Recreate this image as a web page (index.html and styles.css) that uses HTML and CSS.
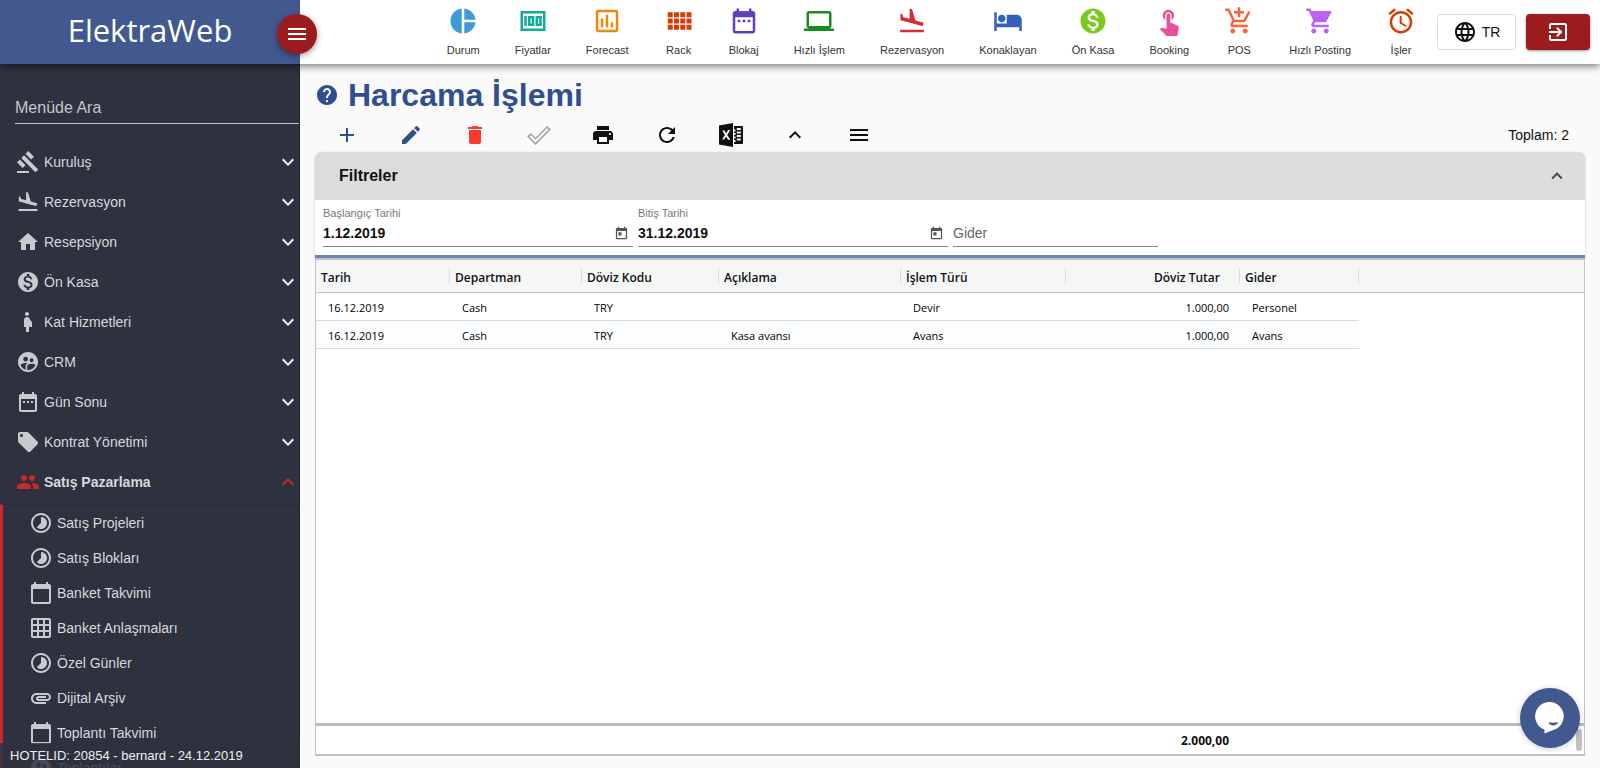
FILE: index.html
```html
<!DOCTYPE html>
<html lang="tr">
<head>
    <meta charset="UTF-8">
    <meta name="viewport" content="width=device-width, initial-scale=1.0">
    <title>ElektraWeb - Harcama İşlemi</title>
    <link rel="stylesheet" href="styles.css">
</head>
<body>
    <!-- icon set -->
    <svg class="sprite" aria-hidden="true">
        <symbol id="i-menu" viewBox="0 0 24 24"><path d="M3 18h18v-2H3v2zm0-5h18v-2H3v2zm0-7v2h18V6H3z"/></symbol>
        <symbol id="i-more" viewBox="0 0 24 24"><path d="M16.59 8.59L12 13.17 7.41 8.59 6 10l6 6 6-6z"/></symbol>
        <symbol id="i-less" viewBox="0 0 24 24"><path d="M12 8l-6 6 1.41 1.41L12 10.83l4.59 4.58L18 14z"/></symbol>
        <symbol id="i-gavel" viewBox="0 0 24 24"><path d="M1 21h12v2H1zM5.245 8.07l2.83-2.827 14.14 14.142-2.828 2.828zM12.317 1l5.657 5.656-2.83 2.83-5.654-5.66zM3.825 9.485l5.657 5.657-2.828 2.828-5.657-5.657z"/></symbol>
        <symbol id="i-land" viewBox="0 0 24 24"><path d="M2.5 19h19v2h-19zm7.18-5.73l4.35 1.16 5.31 1.42c.8.21 1.62-.26 1.84-1.06.21-.8-.26-1.62-1.06-1.84l-5.31-1.42-2.76-9.02L10.12 2v8.28L5.15 8.95l-.93-2.32-1.45-.39v5.17l1.6.43 5.31 1.43z"/></symbol>
        <symbol id="i-home" viewBox="0 0 24 24"><path d="M10 20v-6h4v6h5v-8h3L12 3 2 12h3v8z"/></symbol>
        <symbol id="i-money" viewBox="0 0 24 24"><path d="M12 2C6.48 2 2 6.48 2 12s4.48 10 10 10 10-4.48 10-10S17.52 2 12 2zm1.41 16.09V20h-2.67v-1.93c-1.71-.36-3.16-1.46-3.27-3.4h1.96c.1 1.05.82 1.87 2.65 1.87 1.96 0 2.4-.98 2.4-1.59 0-.83-.44-1.61-2.67-2.14-2.48-.6-4.18-1.62-4.18-3.67 0-1.72 1.39-2.84 3.11-3.21V4h2.67v1.95c1.86.45 2.79 1.86 2.85 3.39H14.3c-.05-1.11-.64-1.87-2.22-1.87-1.5 0-2.4.68-2.4 1.64 0 .84.65 1.39 2.67 1.91s4.18 1.39 4.18 3.91c-.01 1.83-1.38 2.83-3.12 3.16z"/></symbol>
        <symbol id="i-woman" viewBox="0 0 24 24"><path d="M9 4c0-1.11.89-2 2-2s2 .89 2 2-.89 2-2 2-2-.89-2-2zm7 9c-.01-1.34-.83-2.51-2-3 0-1.66-1.34-3-3-3s-3 1.34-3 3v7h2v5h3v-5h3v-4z"/></symbol>
        <symbol id="i-crm" viewBox="0 0 24 24"><path d="M11.99 2c-5.52 0-10 4.48-10 10s4.48 10 10 10 10-4.48 10-10-4.48-10-10-10zm3.61 6.34c1.07 0 1.93.86 1.93 1.93 0 1.07-.86 1.93-1.93 1.93-1.07 0-1.93-.86-1.93-1.93-.01-1.07.86-1.93 1.93-1.93zm-6-1.58c1.3 0 2.36 1.06 2.36 2.36 0 1.3-1.06 2.36-2.36 2.36s-2.36-1.06-2.36-2.36c0-1.31 1.05-2.36 2.36-2.36zm0 9.13v3.75c-2.4-.75-4.3-2.6-5.14-4.96 1.05-1.12 3.67-1.69 5.14-1.69.53 0 1.2.08 1.9.22-1.64.87-1.9 2.02-1.9 2.68zM11.99 20c-.27 0-.53-.01-.79-.04v-4.07c0-1.42 2.94-2.13 4.4-2.13 1.07 0 2.92.39 3.84 1.15-1.17 2.97-4.06 5.09-7.45 5.09z"/></symbol>
        <symbol id="i-range" viewBox="0 0 24 24"><path d="M9 11H7v2h2v-2zm4 0h-2v2h2v-2zm4 0h-2v2h2v-2zm2-7h-1V2h-2v2H8V2H6v2H5c-1.11 0-1.99.9-1.99 2L3 20c0 1.1.89 2 2 2h14c1.1 0 2-.9 2-2V6c0-1.1-.9-2-2-2zm0 16H5V9h14v11z"/></symbol>
        <symbol id="i-tag" viewBox="0 0 24 24"><path d="M21.41 11.58l-9-9C12.05 2.22 11.55 2 11 2H4c-1.1 0-2 .9-2 2v7c0 .55.22 1.05.59 1.42l9 9c.36.36.86.58 1.41.58.55 0 1.05-.22 1.41-.59l7-7c.37-.36.59-.86.59-1.41 0-.55-.23-1.06-.59-1.42zM5.5 7C4.67 7 4 6.33 4 5.5S4.67 4 5.5 4 7 4.67 7 5.5 6.33 7 5.5 7z"/></symbol>
        <symbol id="i-people" viewBox="0 0 24 24"><path d="M16 11c1.66 0 2.99-1.34 2.99-3S17.66 5 16 5c-1.66 0-3 1.34-3 3s1.34 3 3 3zm-8 0c1.66 0 2.99-1.34 2.99-3S9.66 5 8 5C6.34 5 5 6.34 5 8s1.34 3 3 3zm0 2c-2.33 0-7 1.17-7 3.5V19h14v-2.5c0-2.33-4.67-3.5-7-3.5zm8 0c-.29 0-.62.02-.97.05 1.16.84 1.97 1.97 1.97 3.45V19h6v-2.5c0-2.33-4.67-3.5-7-3.5z"/></symbol>
        <symbol id="i-lapse" viewBox="0 0 24 24"><path d="M16.24 7.76C15.07 6.59 13.54 6 12 6v6l-4.24 4.24c2.34 2.34 6.14 2.34 8.49 0 2.34-2.34 2.34-6.14-.01-8.48zM12 2C6.48 2 2 6.48 2 12s4.48 10 10 10 10-4.48 10-10S17.52 2 12 2zm0 18c-4.42 0-8-3.58-8-8s3.58-8 8-8 8 3.58 8 8-3.58 8-8 8z"/></symbol>
        <symbol id="i-calendar" viewBox="0 0 24 24"><path d="M20 3h-1V1h-2v2H7V1H5v2H4c-1.1 0-2 .9-2 2v16c0 1.1.9 2 2 2h16c1.1 0 2-.9 2-2V5c0-1.1-.9-2-2-2zm0 18H4V8h16v13z"/></symbol>
        <symbol id="i-grid" viewBox="0 0 24 24"><path d="M20 2H4c-1.1 0-2 .9-2 2v16c0 1.1.9 2 2 2h16c1.1 0 2-.9 2-2V4c0-1.1-.9-2-2-2zM8 20H4v-4h4v4zm0-6H4v-4h4v4zm0-6H4V4h4v4zm6 12h-4v-4h4v4zm0-6h-4v-4h4v4zm0-6h-4V4h4v4zm6 12h-4v-4h4v4zm0-6h-4v-4h4v4zm0-6h-4V4h4v4z"/></symbol>
        <symbol id="i-clip" viewBox="0 0 24 24"><path d="M2 12.5C2 9.46 4.46 7 7.5 7H18c2.21 0 4 1.79 4 4s-1.79 4-4 4H9.5C8.12 15 7 13.88 7 12.5S8.12 10 9.5 10H17v2H9.41c-.55 0-.55 1 0 1H18c1.1 0 2-.9 2-2s-.9-2-2-2H7.5C5.57 9 4 10.57 4 12.5S5.57 16 7.5 16H17v2H7.5C4.46 18 2 15.54 2 12.5z"/></symbol>
        <symbol id="i-pie" viewBox="0 0 24 24"><path d="M11 2v20c-5.07-.5-9-4.79-9-10s3.93-9.5 9-10zm2.03 0v8.99H22c-.47-4.74-4.24-8.52-8.97-8.99zm0 11.01V22c4.74-.47 8.5-4.25 8.97-8.99h-8.97z"/></symbol>
        <symbol id="i-price" viewBox="0 0 24 24"><path fill-rule="evenodd" d="M2 4h20v16H2zM4 6v12h16V6zM5 8h2v8H5zM8 8h5v8H8zM10 10v4h1v-4zM14 8h5v8h-5zM16 10v4h1v-4z"/></symbol>
        <symbol id="i-chart" viewBox="0 0 24 24"><path d="M9 17H7v-7h2v7zm4 0h-2V7h2v10zm4 0h-2v-4h2v4zm2 2H5V5h14v14zm0-16H5c-1.1 0-2 .9-2 2v14c0 1.1.9 2 2 2h14c1.1 0 2-.9 2-2V5c0-1.1-.9-2-2-2z"/></symbol>
        <symbol id="i-rack" viewBox="0 0 24 24"><path d="M3 9h4V5H3v4zm0 5h4v-4H3v4zm5 0h4v-4H8v4zm5 0h4v-4h-4v4zM8 9h4V5H8v4zm5-4v4h4V5h-4zm5 9h4v-4h-4v4zM3 19h4v-4H3v4zm5 0h4v-4H8v4zm5 0h4v-4h-4v4zm5 0h4v-4h-4v4zm0-14v4h4V5h-4z"/></symbol>
        <symbol id="i-laptop" viewBox="0 0 24 24"><path d="M20 18c1.1 0 1.99-.9 1.99-2L22 6c0-1.1-.9-2-2-2H4c-1.1 0-2 .9-2 2v10c0 1.1.9 2 2 2H0v2h24v-2h-4zM4 6h16v10H4V6z"/></symbol>
        <symbol id="i-hotel" viewBox="0 0 24 24"><path d="M7 13c1.66 0 3-1.34 3-3S8.66 7 7 7s-3 1.34-3 3 1.34 3 3 3zm12-6h-8v7H3V5H1v15h2v-3h18v3h2v-9c0-2.21-1.79-4-4-4z"/></symbol>
        <symbol id="i-touch" viewBox="0 0 24 24"><path d="M9 11.24V7.5C9 6.12 10.12 5 11.5 5S14 6.12 14 7.5v3.74c1.21-.81 2-2.18 2-3.74C16 5.01 13.99 3 11.5 3S7 5.01 7 7.5c0 1.56.79 2.93 2 3.74zm9.84 4.63l-4.54-2.26c-.17-.07-.35-.11-.54-.11H13v-6c0-.83-.67-1.5-1.5-1.5S10 6.67 10 7.5v10.74l-3.43-.72c-.08-.01-.15-.03-.24-.03-.31 0-.59.13-.79.33l-.79.8 4.94 4.94c.27.27.65.44 1.06.44h6.79c.75 0 1.33-.55 1.44-1.28l.75-5.27c.01-.07.02-.14.02-.2 0-.62-.38-1.16-.91-1.38z"/></symbol>
        <symbol id="i-cartadd" viewBox="0 0 24 24"><path d="M11 9h2V6h3V4h-3V1h-2v3H8v2h3v3zm-4 9c-1.1 0-1.99.9-1.99 2S5.9 22 7 22s2-.9 2-2-.9-2-2-2zm10 0c-1.1 0-1.99.9-1.99 2s.89 2 1.99 2 2-.9 2-2-.9-2-2-2zm-9.83-3.25l.03-.12.9-1.63h7.45c.75 0 1.41-.41 1.75-1.03l3.86-7.01L19.42 4h-.01l-1.1 2-2.76 5H8.53l-.13-.27L6.16 6l-.95-2-.94-2H1v2h2l3.6 7.59-1.35 2.45c-.16.28-.25.61-.25.96 0 1.1.9 2 2 2h12v-2H7.42c-.13 0-.25-.11-.25-.25z"/></symbol>
        <symbol id="i-cart" viewBox="0 0 24 24"><path d="M7 18c-1.1 0-1.99.9-1.99 2S5.9 22 7 22s2-.9 2-2-.9-2-2-2zM1 2v2h2l3.6 7.59-1.35 2.45c-.16.28-.25.61-.25.96 0 1.1.9 2 2 2h12v-2H7.42c-.14 0-.25-.11-.25-.25l.03-.12.9-1.63h7.45c.75 0 1.41-.41 1.75-1.03l3.58-6.49c.08-.14.12-.31.12-.48 0-.55-.45-1-1-1H5.21l-.94-2H1zm16 16c-1.1 0-1.99.9-1.99 2s.89 2 1.99 2 2-.9 2-2-.9-2-2-2z"/></symbol>
        <symbol id="i-alarm" viewBox="0 0 24 24"><path d="M22 5.72l-4.6-3.86-1.29 1.53 4.6 3.86L22 5.72zM7.88 3.39L6.6 1.86 2 5.71l1.29 1.53 4.59-3.85zM12.5 8H11v6l4.75 2.85.75-1.23-4-2.37V8zM12 4c-4.97 0-9 4.03-9 9s4.02 9 9 9c4.97 0 9-4.03 9-9s-4.03-9-9-9zm0 16c-3.87 0-7-3.13-7-7s3.13-7 7-7 7 3.13 7 7-3.13 7-7 7z"/></symbol>
        <symbol id="i-globe" viewBox="0 0 24 24"><path d="M11.99 2C6.47 2 2 6.48 2 12s4.47 10 9.99 10C17.52 22 22 17.52 22 12S17.52 2 11.99 2zm6.93 6h-2.95c-.32-1.25-.78-2.45-1.38-3.56 1.84.63 3.37 1.91 4.33 3.56zM12 4.04c.83 1.2 1.48 2.53 1.91 3.96h-3.82c.43-1.43 1.08-2.76 1.91-3.96zM4.26 14C4.1 13.36 4 12.69 4 12s.1-1.36.26-2h3.38c-.08.66-.14 1.32-.14 2 0 .68.06 1.34.14 2H4.26zm.82 2h2.95c.32 1.25.78 2.45 1.38 3.56-1.84-.63-3.37-1.9-4.33-3.56zm2.95-8H5.08c.96-1.66 2.49-2.93 4.33-3.56C8.81 5.55 8.35 6.75 8.03 8zM12 19.96c-.83-1.2-1.48-2.53-1.91-3.96h3.82c-.43 1.43-1.08 2.76-1.91 3.96zM14.34 14H9.66c-.09-.66-.16-1.32-.16-2 0-.68.07-1.35.16-2h4.68c.09.65.16 1.32.16 2 0 .68-.07 1.34-.16 2zm.25 5.56c.6-1.11 1.06-2.31 1.38-3.56h2.95c-.96 1.65-2.49 2.93-4.33 3.56zM16.36 14c.08-.66.14-1.32.14-2 0-.68-.06-1.34-.14-2h3.38c.16.64.26 1.31.26 2s-.1 1.36-.26 2h-3.38z"/></symbol>
        <symbol id="i-exit" viewBox="0 0 24 24"><path d="M10.09 15.59L11.5 17l5-5-5-5-1.41 1.41L12.67 11H3v2h9.67l-2.58 2.59zM19 3H5c-1.11 0-2 .9-2 2v4h2V5h14v14H5v-4H3v4c0 1.1.89 2 2 2h14c1.1 0 2-.9 2-2V5c0-1.1-.9-2-2-2z"/></symbol>
        <symbol id="i-help" viewBox="0 0 24 24"><path d="M12 2C6.48 2 2 6.48 2 12s4.48 10 10 10 10-4.48 10-10S17.52 2 12 2zm1 17h-2v-2h2v2zm2.07-7.75l-.9.92C13.45 12.9 13 13.5 13 15h-2v-.5c0-1.1.45-2.1 1.17-2.83l1.24-1.26c.37-.36.59-.86.59-1.41 0-1.1-.9-2-2-2s-2 .9-2 2H8c0-2.21 1.79-4 4-4s4 1.79 4 4c0 .88-.36 1.68-.93 2.25z"/></symbol>
        <symbol id="i-add" viewBox="0 0 24 24"><path d="M19 13h-6v6h-2v-6H5v-2h6V5h2v6h6v2z"/></symbol>
        <symbol id="i-edit" viewBox="0 0 24 24"><path d="M3 17.25V21h3.75L17.81 9.94l-3.75-3.75L3 17.25zM20.71 7.04c.39-.39.39-1.02 0-1.41l-2.34-2.34c-.39-.39-1.02-.39-1.41 0l-1.83 1.83 3.75 3.75 1.83-1.83z"/></symbol>
        <symbol id="i-delete" viewBox="0 0 24 24"><path d="M6 19c0 1.1.9 2 2 2h8c1.1 0 2-.9 2-2V7H6v12zM19 4h-3.5l-1-1h-5l-1 1H5v2h14V4z"/></symbol>
        <symbol id="i-check" viewBox="0 0 24 24"><path d="M1.2 13.6l2.6-2.6 4.7 4.7L20.2 4l2.6 2.6L8.5 20.9z" fill="none" stroke="currentColor" stroke-width="1.5"/></symbol>
        <symbol id="i-print" viewBox="0 0 24 24"><path d="M19 8H5c-1.66 0-3 1.34-3 3v6h4v4h12v-4h4v-6c0-1.66-1.34-3-3-3zm-3 11H8v-5h8v5zm3-7c-.55 0-1-.45-1-1s.45-1 1-1 1 .45 1 1-.45 1-1 1zm-1-9H6v4h12V3z"/></symbol>
        <symbol id="i-refresh" viewBox="0 0 24 24"><path d="M17.65 6.35C16.2 4.9 14.21 4 12 4c-4.42 0-7.99 3.58-7.99 8s3.57 8 7.99 8c3.73 0 6.84-2.55 7.73-6h-2.08c-.82 2.33-3.04 4-5.65 4-3.31 0-6-2.69-6-6s2.69-6 6-6c1.66 0 3.14.69 4.22 1.78L13 11h7V4l-2.35 2.35z"/></symbol>
        <symbol id="i-excel" viewBox="0 0 24 24"><path fill-rule="evenodd" d="M0 2.6L14 0v24L0 21.4zM3.3 7.5L6 12l-2.9 4.5h2.1L7.1 13.4l1.9 3.3h2.3L8.3 12l2.9-5H9l-1.8 3.4L5.5 7.4zM15 3h8.2c.5 0 .8.3.8.8v16.4c0 .5-.3.8-.8.8H15v-2h1.5v-2H15v-1.5h1.5v-2H15V12h1.5v-2H15V8.5h1.5v-2H15zM17.8 5h4v2h-4zM17.8 8.5h4v2h-4zM17.8 12h4v2h-4zM17.8 15.5h4v2h-4z"/></symbol>
        <symbol id="i-today" viewBox="0 0 24 24"><path d="M19 3h-1V1h-2v2H8V1H6v2H5c-1.11 0-1.99.9-1.99 2L3 19c0 1.1.89 2 2 2h14c1.1 0 2-.9 2-2V5c0-1.1-.9-2-2-2zm0 16H5V8h14v11zM7 10h5v5H7z"/></symbol>
        <symbol id="i-chat" viewBox="0 0 30 32"><path fill-rule="evenodd" d="M9.5 27.7A14.3 14.3 0 1 1 22 26.4L9.500 31.500zM13.500 20.300c.8 4.200 8.700 4.200 9.500 0-2.500.6-7 .6-9.500 0z"/></symbol>
    </svg>

    <div class="app">
        <header class="header">
            <div class="brand">
                <span class="logo">ElektraWeb</span>
                <button class="menu-toggle" type="button" aria-label="Menü"><svg class="icon"><use href="#i-menu"/></svg></button>
            </div>
            <nav class="shortcuts">
                <a class="shortcut" href="#"><svg class="icon-lg c-blue"><use href="#i-pie"/></svg>Durum</a>
                <a class="shortcut" href="#"><svg class="icon-lg c-teal"><use href="#i-price"/></svg>Fiyatlar</a>
                <a class="shortcut" href="#"><svg class="icon-lg c-orange"><use href="#i-chart"/></svg>Forecast</a>
                <a class="shortcut" href="#"><svg class="icon-lg c-rust"><use href="#i-rack"/></svg>Rack</a>
                <a class="shortcut" href="#"><svg class="icon-lg c-purple"><use href="#i-range"/></svg>Blokaj</a>
                <a class="shortcut" href="#"><svg class="icon-lg c-green"><use href="#i-laptop"/></svg>Hızlı İşlem</a>
                <a class="shortcut" href="#"><svg class="icon-lg c-red"><use href="#i-land"/></svg>Rezervasyon</a>
                <a class="shortcut" href="#"><svg class="icon-lg c-navy"><use href="#i-hotel"/></svg>Konaklayan</a>
                <a class="shortcut" href="#"><svg class="icon-lg c-lime"><use href="#i-money"/></svg>Ön Kasa</a>
                <a class="shortcut" href="#"><svg class="icon-lg c-pink"><use href="#i-touch"/></svg>Booking</a>
                <a class="shortcut" href="#"><svg class="icon-lg c-coral"><use href="#i-cartadd"/></svg>POS</a>
                <a class="shortcut" href="#"><svg class="icon-lg c-violet"><use href="#i-cart"/></svg>Hızlı Posting</a>
                <a class="shortcut" href="#"><svg class="icon-lg c-rust"><use href="#i-alarm"/></svg>İşler</a>
            </nav>
            <div class="header-actions">
                <button class="lang" type="button"><svg class="icon"><use href="#i-globe"/></svg>TR</button>
                <button class="logout" type="button" aria-label="Çıkış"><svg class="icon"><use href="#i-exit"/></svg></button>
            </div>
        </header>

        <aside class="sidebar">
            <input class="menu-search" type="text" placeholder="Menüde Ara" aria-label="Menüde Ara">
            <ul class="menu">
                <li><a class="menu-item" href="#"><svg class="icon"><use href="#i-gavel"/></svg><span>Kuruluş</span><svg class="icon arrow"><use href="#i-more"/></svg></a></li>
                <li><a class="menu-item" href="#"><svg class="icon"><use href="#i-land"/></svg><span>Rezervasyon</span><svg class="icon arrow"><use href="#i-more"/></svg></a></li>
                <li><a class="menu-item" href="#"><svg class="icon"><use href="#i-home"/></svg><span>Resepsiyon</span><svg class="icon arrow"><use href="#i-more"/></svg></a></li>
                <li><a class="menu-item" href="#"><svg class="icon"><use href="#i-money"/></svg><span>Ön Kasa</span><svg class="icon arrow"><use href="#i-more"/></svg></a></li>
                <li><a class="menu-item" href="#"><svg class="icon"><use href="#i-woman"/></svg><span>Kat Hizmetleri</span><svg class="icon arrow"><use href="#i-more"/></svg></a></li>
                <li><a class="menu-item" href="#"><svg class="icon"><use href="#i-crm"/></svg><span>CRM</span><svg class="icon arrow"><use href="#i-more"/></svg></a></li>
                <li><a class="menu-item" href="#"><svg class="icon"><use href="#i-range"/></svg><span>Gün Sonu</span><svg class="icon arrow"><use href="#i-more"/></svg></a></li>
                <li><a class="menu-item" href="#"><svg class="icon"><use href="#i-tag"/></svg><span>Kontrat Yönetimi</span><svg class="icon arrow"><use href="#i-more"/></svg></a></li>
                <li>
                    <a class="menu-item active" href="#"><svg class="icon"><use href="#i-people"/></svg><span>Satış Pazarlama</span><svg class="icon arrow"><use href="#i-less"/></svg></a>
                    <ul class="submenu">
                        <li><a class="submenu-item" href="#"><svg class="icon"><use href="#i-lapse"/></svg>Satış Projeleri</a></li>
                        <li><a class="submenu-item" href="#"><svg class="icon"><use href="#i-lapse"/></svg>Satış Blokları</a></li>
                        <li><a class="submenu-item" href="#"><svg class="icon"><use href="#i-calendar"/></svg>Banket Takvimi</a></li>
                        <li><a class="submenu-item" href="#"><svg class="icon"><use href="#i-grid"/></svg>Banket Anlaşmaları</a></li>
                        <li><a class="submenu-item" href="#"><svg class="icon"><use href="#i-lapse"/></svg>Özel Günler</a></li>
                        <li><a class="submenu-item" href="#"><svg class="icon"><use href="#i-clip"/></svg>Dijital Arşiv</a></li>
                        <li><a class="submenu-item" href="#"><svg class="icon"><use href="#i-calendar"/></svg>Toplantı Takvimi</a></li>
                        <li><a class="submenu-item" href="#"><svg class="icon"><use href="#i-crm"/></svg>Toplantılar</a></li>
                    </ul>
                </li>
            </ul>
            <div class="hotel-info">HOTELID: 20854 - bernard - 24.12.2019</div>
        </aside>

        <main class="content">
            <div class="page-title">
                <svg class="icon"><use href="#i-help"/></svg>
                <h1>Harcama İşlemi</h1>
            </div>
            <div class="toolbar">
                <button class="tool c-brand" type="button" aria-label="Ekle"><svg class="icon"><use href="#i-add"/></svg></button>
                <button class="tool c-brand" type="button" aria-label="Düzenle"><svg class="icon"><use href="#i-edit"/></svg></button>
                <button class="tool c-delete" type="button" aria-label="Sil"><svg class="icon"><use href="#i-delete"/></svg></button>
                <button class="tool c-muted" type="button" aria-label="Onayla"><svg class="icon"><use href="#i-check"/></svg></button>
                <button class="tool" type="button" aria-label="Yazdır"><svg class="icon"><use href="#i-print"/></svg></button>
                <button class="tool" type="button" aria-label="Yenile"><svg class="icon"><use href="#i-refresh"/></svg></button>
                <button class="tool" type="button" aria-label="Excel"><svg class="icon"><use href="#i-excel"/></svg></button>
                <button class="tool" type="button" aria-label="Daralt"><svg class="icon"><use href="#i-less"/></svg></button>
                <button class="tool" type="button" aria-label="Diğer"><svg class="icon"><use href="#i-menu"/></svg></button>
                <span class="total">Toplam: 2</span>
            </div>

            <section class="filters">
                <button class="filters-head" type="button">Filtreler<svg class="icon"><use href="#i-less"/></svg></button>
                <div class="filters-body">
                    <div class="field">
                        <label for="startDate">Başlangıç Tarihi</label>
                        <div class="field-line">
                            <input type="text" id="startDate" value="1.12.2019">
                            <svg class="icon-sm"><use href="#i-today"/></svg>
                        </div>
                    </div>
                    <div class="field">
                        <label for="endDate">Bitiş Tarihi</label>
                        <div class="field-line">
                            <input type="text" id="endDate" value="31.12.2019">
                            <svg class="icon-sm"><use href="#i-today"/></svg>
                        </div>
                    </div>
                    <div class="field field-short">
                        <div class="field-line">
                            <input type="text" id="expense" placeholder="Gider" aria-label="Gider">
                        </div>
                    </div>
                </div>
            </section>

            <section class="grid">
                <table class="grid-table">
                    <colgroup>
                        <col class="w-date"><col class="w-dept"><col class="w-code"><col class="w-desc"><col class="w-type"><col class="w-sum"><col class="w-exp"><col>
                    </colgroup>
                    <thead>
                        <tr>
                            <th>Tarih</th>
                            <th>Departman</th>
                            <th>Döviz Kodu</th>
                            <th>Açıklama</th>
                            <th>İşlem Türü</th>
                            <th class="num">Döviz Tutar</th>
                            <th>Gider</th>
                            <th></th>
                        </tr>
                    </thead>
                    <tbody>
                        <tr>
                            <td>16.12.2019</td>
                            <td>Cash</td>
                            <td>TRY</td>
                            <td></td>
                            <td>Devir</td>
                            <td class="num">1.000,00</td>
                            <td>Personel</td>
                            <td></td>
                        </tr>
                        <tr>
                            <td>16.12.2019</td>
                            <td>Cash</td>
                            <td>TRY</td>
                            <td>Kasa avansı</td>
                            <td>Avans</td>
                            <td class="num">1.000,00</td>
                            <td>Avans</td>
                            <td></td>
                        </tr>
                    </tbody>
                </table>
                <div class="grid-footer">
                    <span class="grid-sum">2.000,00</span>
                    <span class="scroll-thumb"></span>
                </div>
            </section>
        </main>
    </div>

    <button class="chat" type="button" aria-label="Canlı Destek"><svg><use href="#i-chat"/></svg></button>
</body>
</html>
```

FILE: styles.css
```css
* {
    box-sizing: border-box;
}
body {
    margin: 0;
    font-family: "Liberation Sans", Arial, sans-serif;
    font-size: 14px;
    color: #111;
    background: #fafafa;
}
a {
    color: inherit;
    text-decoration: none;
}
ul {
    list-style: none;
    margin: 0;
    padding: 0;
}
button,
input {
    font: inherit;
    color: inherit;
    border: none;
    background: none;
    padding: 0;
    outline: none;
}
button {
    cursor: pointer;
}
.sprite {
    display: none;
}
.icon,
.icon-lg,
.icon-sm {
    width: 24px;
    height: 24px;
    fill: currentColor;
    flex: none;
}
.icon-lg {
    width: 30px;
    height: 30px;
}
.icon-sm {
    width: 15px;
    height: 15px;
}

/* layout */
.app {
    display: grid;
    grid-template: 64px minmax(0, 1fr) / 300px minmax(0, 1fr);
    height: 100vh;
}

/* header */
.header {
    grid-column: 1 / 3;
    display: flex;
    align-items: center;
    background: #fff;
    box-shadow: 0 2px 8px rgba(0, 0, 0, 0.55);
    z-index: 2;
}
.brand {
    position: relative;
    display: flex;
    align-items: center;
    justify-content: center;
    width: 300px;
    height: 64px;
    padding-bottom: 5px;
    background: #41598f;
    color: #fff;
}
.logo {
    font-family: "Open Sans", sans-serif;
    font-size: 31px;
}
.menu-toggle {
    position: absolute;
    top: 14px;
    right: -17px;
    display: flex;
    align-items: center;
    justify-content: center;
    width: 40px;
    height: 40px;
    border-radius: 50%;
    background: #9c1b1f;
    box-shadow: 0 2px 6px rgba(0, 0, 0, 0.4);
}
.shortcuts {
    flex: 1;
    display: flex;
    justify-content: flex-end;
    padding-top: 6px;
}
.shortcut {
    display: flex;
    flex-direction: column;
    align-items: center;
    padding: 0 18px 0 17px;
    font-size: 11px;
    line-height: 28px;
    white-space: nowrap;
    color: #333;
}
.header-actions {
    display: flex;
    gap: 10px;
    padding: 0 10px 0 3px;
}
.lang,
.logout {
    display: flex;
    align-items: center;
    justify-content: center;
    height: 36px;
    border-radius: 4px;
}
.lang {
    gap: 5px;
    width: 79px;
    border: 1px solid #ddd;
}
.logout {
    width: 64px;
    background: #9c1b1f;
    color: #fff;
    box-shadow: 0 1px 3px rgba(0, 0, 0, 0.4);
}
.c-blue { color: #3f9bd8; }
.c-teal { color: #0fae9a; }
.c-orange { color: #f0880c; }
.c-rust { color: #d63c06; }
.c-purple { color: #6140b8; }
.c-green { color: #1a8a1f; }
.c-red { color: #d0303a; }
.c-navy { color: #3460bb; }
.c-lime { color: #7ac91f; }
.c-pink { color: #e8509c; }
.c-coral { color: #f8643c; }
.c-violet { color: #bb62f5; }
.c-brand { color: #2f4f8f; }
.c-delete { color: #fb3a2c; }
.c-muted { color: #a0a0a0; }

/* sidebar */
.sidebar {
    position: relative;
    overflow: hidden;
    padding-top: 29px;
    background: #2e323e;
    box-shadow: inset -1px 0 #20242f;
    color: #d6d8dc;
}
.menu-search {
    display: block;
    width: 284px;
    height: 31px;
    margin: 0 0 18px 15px;
    border-bottom: 1px solid #c4c6ca;
    font-size: 16px;
}
.menu-search::placeholder {
    color: #c4c6ca;
    opacity: 1;
}
.menu-item {
    display: flex;
    align-items: center;
    gap: 4px;
    height: 40px;
    padding-left: 16px;
}
.menu-item .icon,
.submenu-item .icon {
    color: #c8cacd;
}
.menu-item .arrow {
    margin-left: auto;
    color: #eee;
}
.menu-item.active {
    font-weight: bold;
}
.menu-item.active .icon {
    color: #c8282e;
}
.submenu {
    margin-top: 2px;
    border-left: 3px solid #c8282e;
    border-top: 1px solid #282c37;
}
.submenu-item {
    display: flex;
    align-items: center;
    gap: 4px;
    height: 35px;
    padding-left: 26px;
}
.hotel-info {
    position: absolute;
    left: 0;
    right: 0;
    bottom: 0;
    padding-left: 10px;
    font-size: 13px;
    line-height: 25px;
    color: #eee;
    background: rgba(46, 50, 62, 0.85);
}

/* content */
.content {
    display: flex;
    flex-direction: column;
    padding: 13px 15px 12px;
}
.page-title {
    display: flex;
    align-items: center;
    gap: 9px;
    color: #2f4f8f;
}
.page-title h1 {
    margin: 0;
    font-size: 32px;
    line-height: 36px;
}
.toolbar {
    display: flex;
    align-items: center;
    height: 39px;
    padding-top: 4px;
}
.tool {
    display: flex;
    justify-content: center;
    width: 64px;
}
.total {
    margin-left: auto;
    padding-right: 16px;
}
.filters {
    border-radius: 6px 6px 0 0;
    border-bottom: 3px solid #6c85b0;
    background: #fff;
    box-shadow: 0 1px 3px rgba(0, 0, 0, 0.2);
}
.filters-head {
    display: flex;
    align-items: center;
    justify-content: space-between;
    width: 100%;
    height: 48px;
    padding: 0 17px 0 24px;
    border-radius: 6px 6px 0 0;
    background: #dcdcdc;
    font-size: 16px;
    font-weight: bold;
}
.filters-head .icon {
    width: 22px;
    height: 22px;
    color: #444;
}
.filters-body {
    display: flex;
    align-items: flex-end;
    height: 55px;
    padding: 0 2px 8px 8px;
}
.field {
    width: 25%;
    padding-right: 5px;
}
.field-short {
    width: 210px;
}
.field label {
    display: block;
    font-size: 11px;
    line-height: 14px;
    color: #777;
}
.field-line {
    display: flex;
    align-items: center;
    height: 27px;
    padding-right: 4px;
    border-bottom: 1px solid #888;
}
.field-line input {
    flex: 1;
    min-width: 0;
    font-weight: bold;
}
.field-line input::placeholder {
    font-weight: normal;
    color: #666;
    opacity: 1;
}
.field-line .icon-sm {
    color: #555;
}

/* data grid */
.grid {
    flex: 1;
    display: flex;
    flex-direction: column;
    justify-content: space-between;
    border: 1px solid #bdc3c7;
    border-top-width: 2px;
    border-bottom-width: 2px;
    background: #fff;
    font-family: "Open Sans", "Noto Sans", sans-serif;
}
.grid-table {
    width: 100%;
    table-layout: fixed;
    border-collapse: separate;
    border-spacing: 0;
}
.w-date { width: 134px; }
.w-dept { width: 132px; }
.w-code { width: 137px; }
.w-desc { width: 182px; }
.w-type { width: 165px; }
.w-sum { width: 174px; }
.w-exp { width: 119px; }
.grid-table th {
    height: 33px;
    padding: 2px 0 0 5px;
    border-bottom: 1px solid #bdc3c7;
    background: linear-gradient(#d9dcde, #d9dcde) right center / 1px 16px no-repeat #f5f7f7;
    font-size: 12px;
    font-weight: 600;
    text-align: left;
}
.grid-table th:last-child {
    background: #f5f7f7;
}
.grid-table td {
    height: 28px;
    padding: 1px 0 0 12px;
    border-bottom: 1px solid #d9dcde;
    font-size: 11px;
    color: #000;
}
.grid-table tr:nth-child(even) td {
    background: #fcfdfe;
}
.grid-table tr td:last-child {
    border-bottom: none;
    background: #fff;
}
.grid-table th.num {
    padding-right: 20px;
    text-align: right;
}
.grid-table td.num {
    padding-right: 11px;
    text-align: right;
}
.grid-footer {
    display: flex;
    align-items: center;
    justify-content: space-between;
    height: 31px;
    padding-right: 2px;
    border-top: 3px solid #b8bfc4;
}
.grid-sum {
    width: 913px;
    font-size: 12px;
    font-weight: bold;
    text-align: right;
}
.scroll-thumb {
    width: 6px;
    height: 22px;
    border-radius: 3px;
    background: #c1c1c1;
}

/* live chat */
.chat {
    position: fixed;
    right: 20px;
    bottom: 20px;
    z-index: 3;
    display: flex;
    align-items: center;
    justify-content: center;
    width: 60px;
    height: 60px;
    border-radius: 50%;
    background: #41598f;
    box-shadow: 0 1px 6px rgba(0, 0, 0, 0.2);
}
.chat svg {
    width: 30px;
    height: 32px;
    fill: #fff;
}
```
